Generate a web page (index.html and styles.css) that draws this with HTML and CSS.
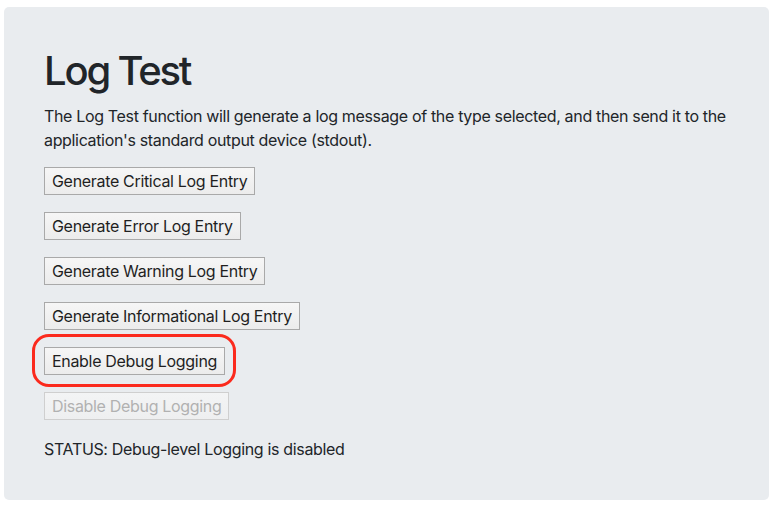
FILE: index.html
```html
<!DOCTYPE html>
<html lang="en">
<head>
<meta charset="utf-8">
<title>Log Test</title>
<link rel="stylesheet" href="styles.css">
</head>
<body>
<main class="panel">
  <h1 class="title">Log Test</h1>
  <p class="lead">The Log Test function will generate a log message of the type selected, and then send it to the application's standard output device (stdout).</p>
  <div class="actions">
    <div class="row"><button class="btn">Generate Critical Log Entry</button></div>
    <div class="row"><button class="btn">Generate Error Log Entry</button></div>
    <div class="row"><button class="btn">Generate Warning Log Entry</button></div>
    <div class="row"><button class="btn">Generate Informational Log Entry</button></div>
    <div class="row"><span class="highlight"><button class="btn">Enable Debug Logging</button></span></div>
    <div class="row"><button class="btn" disabled>Disable Debug Logging</button></div>
    <div class="status">STATUS: Debug-level Logging is disabled</div>
  </div>
</main>
</body>
</html>
```
FILE: styles.css
```css
html, body {
  margin: 0;
  padding: 0;
  background: #ffffff;
}
body {
  padding: 7px 9px 11px 4px;
  font-family: Inter, "Noto Sans", "Liberation Sans", sans-serif;
  color: #212529;
  letter-spacing: -0.34px;
}
.panel {
  background: #e9ecef;
  border-radius: 5px;
  padding: 40px 40px 39px 40px;
}
.title {
  margin: 0 0 9px 0;
  font-size: 40px;
  line-height: 48px;
  font-weight: 500;
  letter-spacing: -2.2px;
}
.lead {
  margin: 0 0 15px 0;
  font-size: 16px;
  line-height: 24px;
}
.actions {
  display: flex;
  flex-direction: column;
  align-items: flex-start;
  gap: 17px;
}
.row {
  display: flex;
}
.btn {
  font-family: inherit;
  font-size: 16px;
  line-height: 20px;
  letter-spacing: -0.32px;
  height: 28px;
  padding: 3px 7px;
  color: #1f1f1f;
  background: linear-gradient(#f6f6f6, #ececec);
  border: 1px solid #a9a9a9;
  border-radius: 0;
  margin: 0;
}
.btn:disabled {
  color: #b1b1b1;
  border-color: #cfcfcf;
  background: linear-gradient(#f3f4f5, #eeeff0);
}
.highlight {
  position: relative;
  display: inline-flex;
}
.highlight::after {
  content: "";
  position: absolute;
  left: -12px;
  right: -11px;
  top: -13px;
  bottom: -12px;
  border: 3px solid #fb2a1d;
  border-radius: 17px;
  pointer-events: none;
}
.status {
  font-size: 16px;
  line-height: 24px;
}
```
